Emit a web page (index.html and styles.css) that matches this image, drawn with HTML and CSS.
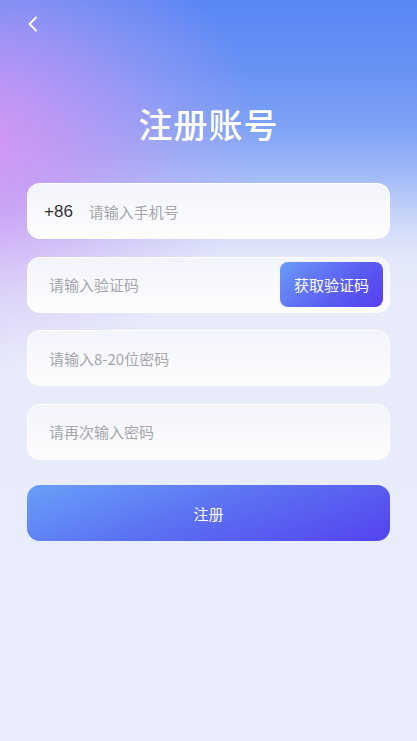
FILE: index.html
```html
<!DOCTYPE html>
<html lang="zh">
<head>
<meta charset="utf-8">
<title>注册账号</title>
<link rel="stylesheet" href="styles.css">
</head>
<body>
<div class="page">
  <div class="topbar">
    <svg class="back" width="12" height="16" viewBox="0 0 12 16"><path d="M9 1.5 L2.5 8 L9 14.5" fill="none" stroke="#fff" stroke-width="1.8" stroke-linecap="round" stroke-linejoin="round"/></svg>
  </div>
  <h1 class="title">注册账号</h1>
  <div class="form">
    <div class="field">
      <span class="prefix">+86</span>
      <span class="ph">请输入手机号</span>
    </div>
    <div class="field field-code">
      <span class="ph">请输入验证码</span>
      <button class="code-btn">获取验证码</button>
    </div>
    <div class="field">
      <span class="ph">请输入8-20位密码</span>
    </div>
    <div class="field">
      <span class="ph">请再次输入密码</span>
    </div>
    <button class="submit">注册</button>
  </div>
</div>
</body>
</html>
```
FILE: styles.css
```css
* { box-sizing: border-box; }
html, body { margin: 0; padding: 0; }
body {
  font-family: "Noto Sans CJK SC", "Noto Sans", sans-serif;
  background: #e7ebfa;
}
.page {
  width: 417px;
  height: 741px;
  overflow: hidden;
  background:
    radial-gradient(ellipse 290px 230px at -30px 140px, rgba(220,148,245,0.95) 0%, rgba(205,150,245,0.7) 35%, rgba(195,160,245,0.3) 70%, rgba(190,170,245,0) 100%),
    linear-gradient(180deg, #5a86f4 0px, #6992f5 70px, #7fa3f6 130px, #a6bdf7 180px, #cbd7f9 220px, #e2e7fa 255px, #e7ebfa 290px, #e8ecfb 741px);
}
.topbar {
  height: 48px;
  padding: 16px 0 0 27px;
}
.back { display: block; }
.title {
  margin: 54px 0 0;
  text-align: center;
  color: #fff;
  font-size: 34px;
  font-weight: 500;
  line-height: 44px;
  letter-spacing: 1px;
}
.form {
  margin-top: 37px;
  padding: 0 27px;
  display: flex;
  flex-direction: column;
  gap: 17.5px;
}
.field {
  height: 56px;
  border-radius: 13px;
  background: linear-gradient(180deg, #f3f4fc 0%, #fdfdfe 100%);
  border: 1px solid rgba(255,255,255,0.8);
  display: flex;
  align-items: center;
  padding: 0 6px 0 21px;
}
.prefix {
  color: #333;
  font-family: "Liberation Sans", Arial, sans-serif;
  font-size: 17px;
  margin-left: -5px;
  margin-right: 16px;
  padding-top: 1px;
}
.ph {
  color: #a6a6aa;
  font-size: 15px;
  flex: 1;
}
.code-btn {
  border: none;
  width: 103px;
  height: 45px;
  border-radius: 8px;
  background: linear-gradient(135deg, #6a9cf7 0%, #5a5cf2 60%, #5540ef 100%);
  color: #fff;
  font-family: "Noto Sans CJK SC", sans-serif;
  font-size: 15px;
  padding: 0;
}
.submit {
  margin-top: 8px;
  height: 56px;
  border: none;
  border-radius: 13px;
  background: linear-gradient(160deg, #6a9ff8 0%, #5c74f3 45%, #5542ef 100%);
  color: #fff;
  font-family: "Noto Sans CJK SC", sans-serif;
  font-size: 15px;
}
```
